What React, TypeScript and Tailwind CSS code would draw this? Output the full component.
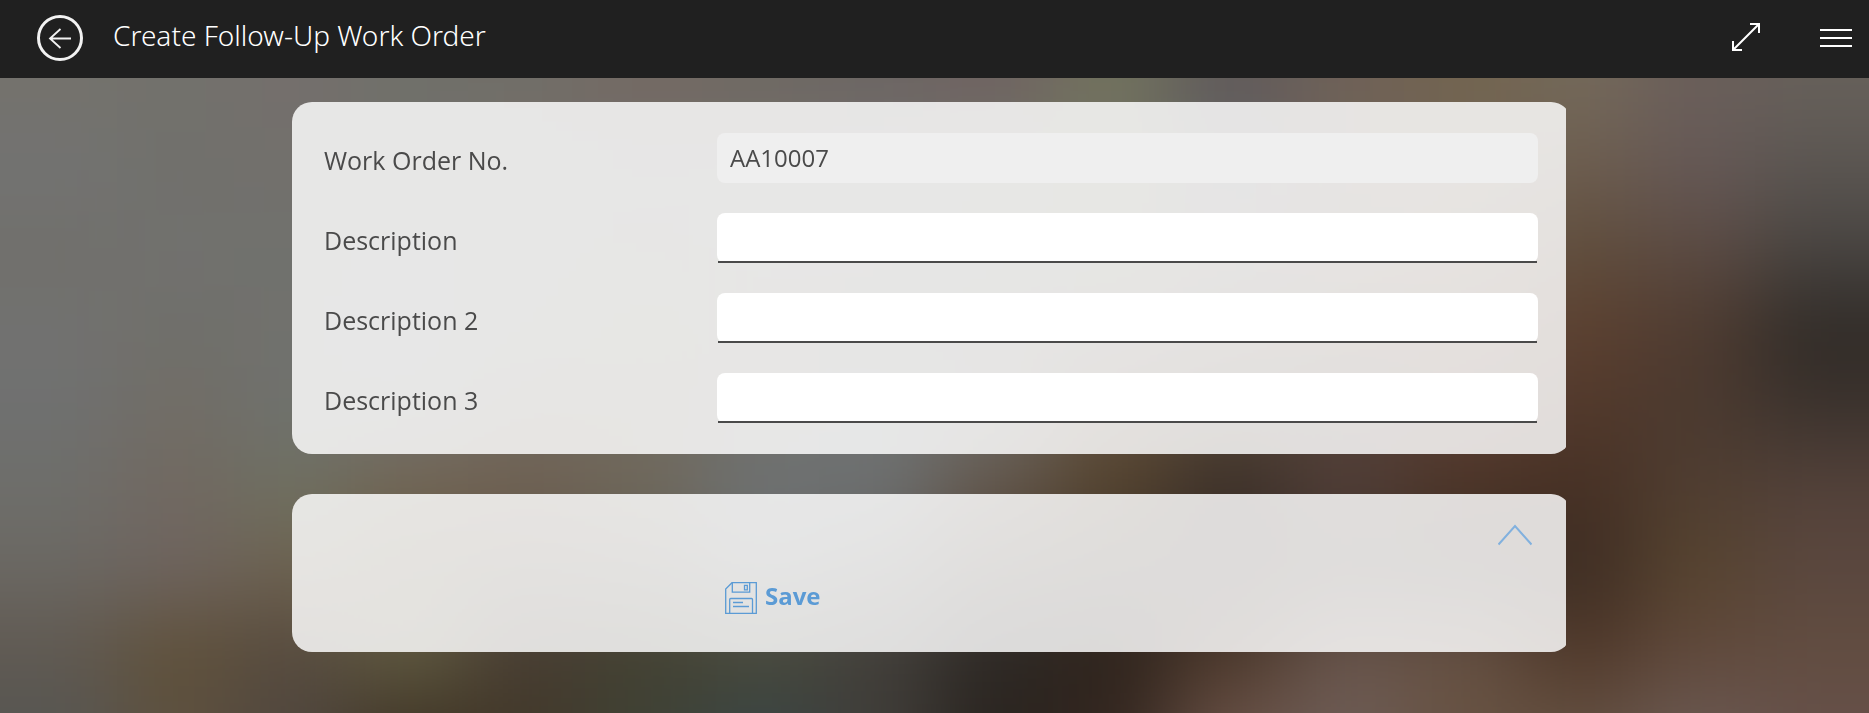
import { useState } from 'react'

const backdrop = [
  ['#74726c', '#72716c', '#746f6c', '#70706a', '#716d67', '#746963', '#6f6963', '#6d6663', '#6e6261', '#71725e', '#5f5a5a', '#6f6158', '#72644f', '#74695a', '#6a5e5a', '#66605a'],
  ['#727373', '#71706b', '#72706c', '#72716c', '#74726c', '#74706c', '#72706c', '#707070', '#74756a', '#75765f', '#66646a', '#706458', '#736555', '#6c5c4e', '#655856', '#5a5551'],
  ['#716f6a', '#71716f', '#70716d', '#737470', '#73706c', '#706c66', '#72706c', '#70716c', '#6c6c64', '#70705c', '#6a6260', '#6c5f55', '#6c5a4a', '#5f4d3c', '#5b4a42', '#484441'],
  ['#727271', '#706f6a', '#71716d', '#727373', '#727369', '#72745f', '#706c64', '#6b6560', '#6c655e', '#68605c', '#64584e', '#64503f', '#644a38', '#5c4030', '#4e3b30', '#2f2a26'],
  ['#6f7070', '#716d66', '#6f716e', '#72726e', '#70685e', '#70685e', '#6f6f6a', '#6f7272', '#6b6a66', '#604f3e', '#544638', '#504038', '#5a4038', '#51382b', '#4b3a30', '#3c332e'],
  ['#6e6e6a', '#716860', '#6e7060', '#736452', '#706152', '#706a5c', '#6f7273', '#6e7172', '#64564a', '#54422c', '#3a2e27', '#523e38', '#4c3324', '#463024', '#503e31', '#54423a'],
  ['#6b6863', '#6e6460', '#6e6250', '#605a44', '#5c5146', '#5c564c', '#66686a', '#5c5a56', '#483e34', '#3f372f', '#3a302a', '#3c332c', '#38302b', '#3d2d23', '#57442f', '#5a473f'],
  ['#605951', '#5f5038', '#564a3e', '#625c42', '#463b31', '#424030', '#484737', '#403d38', '#2c2825', '#2d221b', '#4a3628', '#6a554b', '#685244', '#503829', '#60483b', '#624d40'],
  ['#565653', '#5e5140', '#50473f', '#3e3324', '#43392a', '#3f4236', '#394647', '#413e3a', '#2a241f', '#342720', '#6a5248', '#6c5c56', '#665242', '#645042', '#6b5a53', '#66504a'],
]

const fields = [
  { id: 'work-order-no', label: 'Work Order No.', value: 'AA10007', readOnly: true },
  { id: 'description', label: 'Description', value: '', readOnly: false },
  { id: 'description-2', label: 'Description 2', value: '', readOnly: false },
  { id: 'description-3', label: 'Description 3', value: '', readOnly: false },
]

function Backdrop() {
  return (
    <svg
      className="fixed inset-0 h-full w-full"
      viewBox="0 0 1869 713"
      preserveAspectRatio="none"
      aria-hidden="true"
    >
      <defs>
        <filter id="soft" x="-10%" y="-10%" width="120%" height="120%" colorInterpolationFilters="sRGB">
          <feGaussianBlur stdDeviation="42" />
        </filter>
      </defs>
      <rect width="1869" height="713" fill="#5f5850" />
      <g filter="url(#soft)">
        {backdrop.map((row, y) =>
          row.map((color, x) => {
            const left = x === 0 ? -150 : x * 117
            const right = x === row.length - 1 ? 2020 : (x + 1) * 117 + 1
            const top = y === 0 ? -100 : 50 + y * 80
            const bottom = y === backdrop.length - 1 ? 860 : 131 + y * 80
            return (
              <rect key={`${x}-${y}`} x={left} y={top} width={right - left} height={bottom - top} fill={color} />
            )
          })
        )}
      </g>
    </svg>
  )
}

function Header() {
  return (
    <header className="flex h-[78px] items-center bg-[#202020] pb-0.5 pl-[37px] pr-[17px] text-white">
      <button aria-label="Back" className="shrink-0">
        <svg width="46" height="46" viewBox="0 0 46 46" fill="none" stroke="#f2f2f2">
          <circle cx="23" cy="23" r="21.5" strokeWidth="3" />
          <path d="M34 23.5H13M23.5 14L13 23.5l10.500 9.500" strokeWidth="1.800" />
        </svg>
      </button>
      <h1 className="ml-[30px] flex-1 truncate pb-1.5 font-['Noto_Sans','Open_Sans',sans-serif] text-[28px] font-light leading-9">
        Create Follow-Up Work Order
      </h1>
      <button aria-label="Full screen" className="mr-[60px] shrink-0 pb-0.5">
        <svg width="28" height="28" viewBox="0 0 28 28" fill="none" stroke="white" strokeWidth="2">
          <path d="M18 1h9v9M27 1L1 27M1 18v9h9" />
        </svg>
      </button>
      <button aria-label="Menu" className="shrink-0">
        <svg width="32" height="18" viewBox="0 0 32 18" fill="none" stroke="white" strokeWidth="2">
          <path d="M0 1h32M0 9h32M0 17h32" />
        </svg>
      </button>
    </header>
  )
}

function SaveIcon() {
  return (
    <svg width="32" height="32" viewBox="0 0 32 32" fill="none" stroke="#5b9bd5" strokeWidth="1.300">
      <path d="M7 .7h24.300v30.600H.7V7z" />
      <path d="M7.300.7v9.500h17.400V.7" />
      <path d="M19.500 3.300h2.800v4.500h-2.800z" />
      <path d="M4.700 31.300V17.500q0-1 1-1h20.800q1 0 1 1v13.800" />
      <path d="M8 20.500h10M8 24.500h16" />
    </svg>
  )
}

export default function App() {
  const [values, setValues] = useState<Record<string, string>>(
    Object.fromEntries(fields.map((f) => [f.id, f.value]))
  )
  const [open, setOpen] = useState(true)

  return (
    <div className="min-h-screen font-['Open_Sans','Noto_Sans',sans-serif] text-[#4a4a4a]">
      <Backdrop />
      <div className="relative">
        <Header />
        <main className="mx-auto w-full max-w-[1285px] pr-[11px] pt-6">
          <form className="overflow-hidden" onSubmit={(e) => e.preventDefault()}>
            <div className="-mr-[5px] flex flex-col gap-10">
              <section className="flex flex-col gap-[30px] rounded-[20px] bg-white/83 py-[31px] pl-8 pr-[33px]">
                {fields.map((field) => (
                  <div key={field.id} className="grid grid-cols-[393px_1fr] items-center">
                    <label htmlFor={field.id} className="pt-1 text-[25px] leading-8">
                      {field.label}
                    </label>
                    {field.readOnly ? (
                      <input
                        id={field.id}
                        readOnly
                        value={values[field.id]}
                        className="h-[50px] w-full rounded-lg bg-[#efefef] px-[13px] pb-0.5 text-2xl outline-none"
                      />
                    ) : (
                      <div className="relative after:absolute after:inset-x-px after:bottom-0 after:h-0.5 after:bg-[#4a4a4a]">
                        <input
                          id={field.id}
                          value={values[field.id]}
                          onChange={(e) => setValues({ ...values, [field.id]: e.target.value })}
                          className="block h-[50px] w-full rounded-lg bg-white px-[13px] pb-0.5 text-2xl outline-none"
                        />
                      </div>
                    )}
                  </div>
                ))}
              </section>

              <section className="rounded-[20px] bg-white/83 pb-9 pl-8 pr-[33px] pt-[30px]">
                <div className="flex justify-end pr-[6px]">
                  <button
                    type="button"
                    aria-label={open ? 'Collapse' : 'Expand'}
                    aria-expanded={open}
                    onClick={() => setOpen(!open)}
                  >
                    <svg width="34" height="22" viewBox="0 0 34 22" fill="none" stroke="#82b1de" strokeWidth="2">
                      <path d={open ? 'M.5 20.500L17 2l16.500 18.500' : 'M.5 2L17 20.500 33.500 2'} />
                    </svg>
                  </button>
                </div>
                {open && (
                  <div className="pl-[401px] pt-[34px]">
                    <button className="flex items-center gap-2 text-2xl font-bold leading-8 text-[#5b9bd5]">
                      <SaveIcon />
                      <span className="pb-1">Save</span>
                    </button>
                  </div>
                )}
              </section>
            </div>
          </form>
        </main>
      </div>
    </div>
  )
}
